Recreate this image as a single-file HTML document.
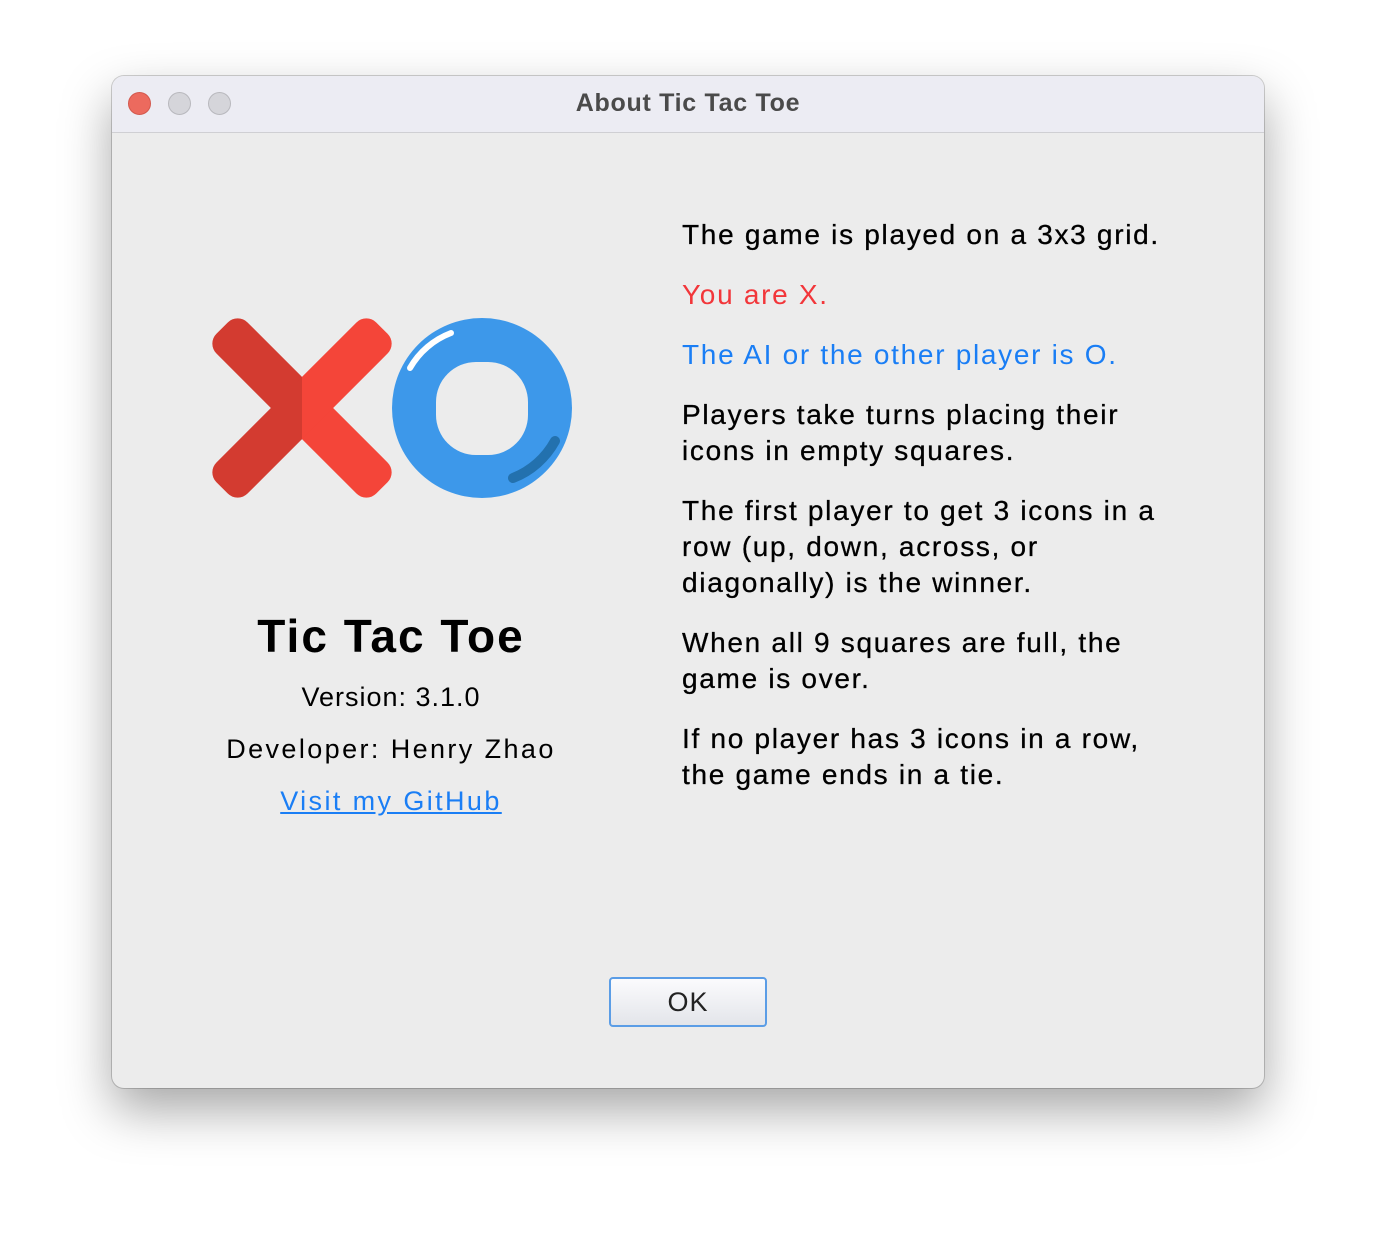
<!DOCTYPE html>
<html><head><meta charset="utf-8"><style>
html,body{margin:0;padding:0;width:1376px;height:1236px;background:#fff;overflow:hidden;font-family:"Liberation Sans",sans-serif;}
.win{position:absolute;left:112px;top:76px;width:1152px;height:1012px;border-radius:12px;background:#ececec;box-shadow:0 22px 50px rgba(0,0,0,0.35),0 0 0 1px rgba(0,0,0,0.18);overflow:hidden;}
.tb{position:absolute;left:0;top:0;width:100%;height:56px;background:#ececf3;border-bottom:1px solid #cfcfd3;}
.tb .t{position:absolute;left:0;right:0;top:0;line-height:54px;text-align:center;font-weight:bold;font-size:25px;color:#4a4a4a;letter-spacing:0.7px;}
.dot{position:absolute;top:16px;width:23px;height:23px;border-radius:50%;box-sizing:border-box;}
.a{position:absolute;white-space:nowrap;line-height:1;}
.p{position:absolute;left:570px;font-size:28px;line-height:36px;color:#000;white-space:nowrap;letter-spacing:1.7px;-webkit-text-stroke:0.3px #000;}
.c{left:0;width:558px;text-align:center;}
.ok{position:absolute;left:497px;top:901px;width:158px;height:50px;box-sizing:border-box;border:2px solid #5b9de6;border-radius:4px;background:linear-gradient(#fbfbfd,#e3e5ea);text-align:center;line-height:46px;font-size:27px;color:#222;letter-spacing:1px;}
</style></head><body>
<div class="win">
 <div class="tb">
  <div class="dot" style="left:16px;background:#ec6a5e;border:1px solid #d3584d"></div>
  <div class="dot" style="left:56px;background:#d5d5da;border:1px solid #b8b8bd"></div>
  <div class="dot" style="left:96px;background:#d5d5da;border:1px solid #b8b8bd"></div>
  <div class="t">About Tic Tac Toe</div>
 </div>
 <svg style="position:absolute;left:0;top:0" width="1152" height="1012">
  <defs><clipPath id="L"><rect x="0" y="0" width="190" height="1012"/></clipPath><clipPath id="R"><rect x="190" y="0" width="400" height="1012"/></clipPath></defs>
  <g clip-path="url(#L)">
   <g transform="translate(190,332)" fill="#d33b30">
    <rect x="-113" y="-22" width="226" height="44" rx="14" transform="rotate(45)"/>
    <rect x="-113" y="-22" width="226" height="44" rx="14" transform="rotate(-45)"/>
   </g>
  </g>
  <g clip-path="url(#R)">
   <g transform="translate(190,332)" fill="#f44539">
    <rect x="-113" y="-22" width="226" height="44" rx="14" transform="rotate(45)"/>
    <rect x="-113" y="-22" width="226" height="44" rx="14" transform="rotate(-45)"/>
   </g>
  </g>
  <circle cx="370" cy="332" r="90" fill="#3d98ea"/>
  <rect x="324" y="286" width="92" height="93" rx="40" fill="#ececec"/>
  <path d="M298,292 A80,80 0 0 1 339,257" stroke="#fff" stroke-width="6" fill="none" stroke-linecap="round"/>
  <path d="M443,365 A82,82 0 0 1 401,402" stroke="#2371ae" stroke-width="10" fill="none" stroke-linecap="round"/>
 </svg>
 <div class="a c" style="top:537px;font-size:46px;font-weight:bold;letter-spacing:2px;">Tic Tac Toe</div>
 <div class="a c" style="top:608px;font-size:27px;letter-spacing:1px;">Version: 3.1.0</div>
 <div class="a c" style="top:660px;font-size:27px;letter-spacing:2.4px;">Developer: Henry Zhao</div>
 <div class="a c" style="top:712px;font-size:27px;color:#1a7ef5;text-decoration:underline;letter-spacing:2.4px;">Visit my GitHub</div>

 <div class="p" style="top:141px">The game is played on a 3x3 grid.</div>
 <div class="p" style="top:201px;color:#f2363a;-webkit-text-stroke:0">You are X.</div>
 <div class="p" style="top:261px;color:#1a7ef5;-webkit-text-stroke:0">The AI or the other player is O.</div>
 <div class="p" style="top:321px">Players take turns placing their<br>icons in empty squares.</div>
 <div class="p" style="top:417px">The first player to get 3 icons in a<br>row (up, down, across, or<br>diagonally) is the winner.</div>
 <div class="p" style="top:549px">When all 9 squares are full, the<br>game is over.</div>
 <div class="p" style="top:645px">If no player has 3 icons in a row,<br>the game ends in a tie.</div>

 <div class="ok">OK</div>
</div>
</body></html>
